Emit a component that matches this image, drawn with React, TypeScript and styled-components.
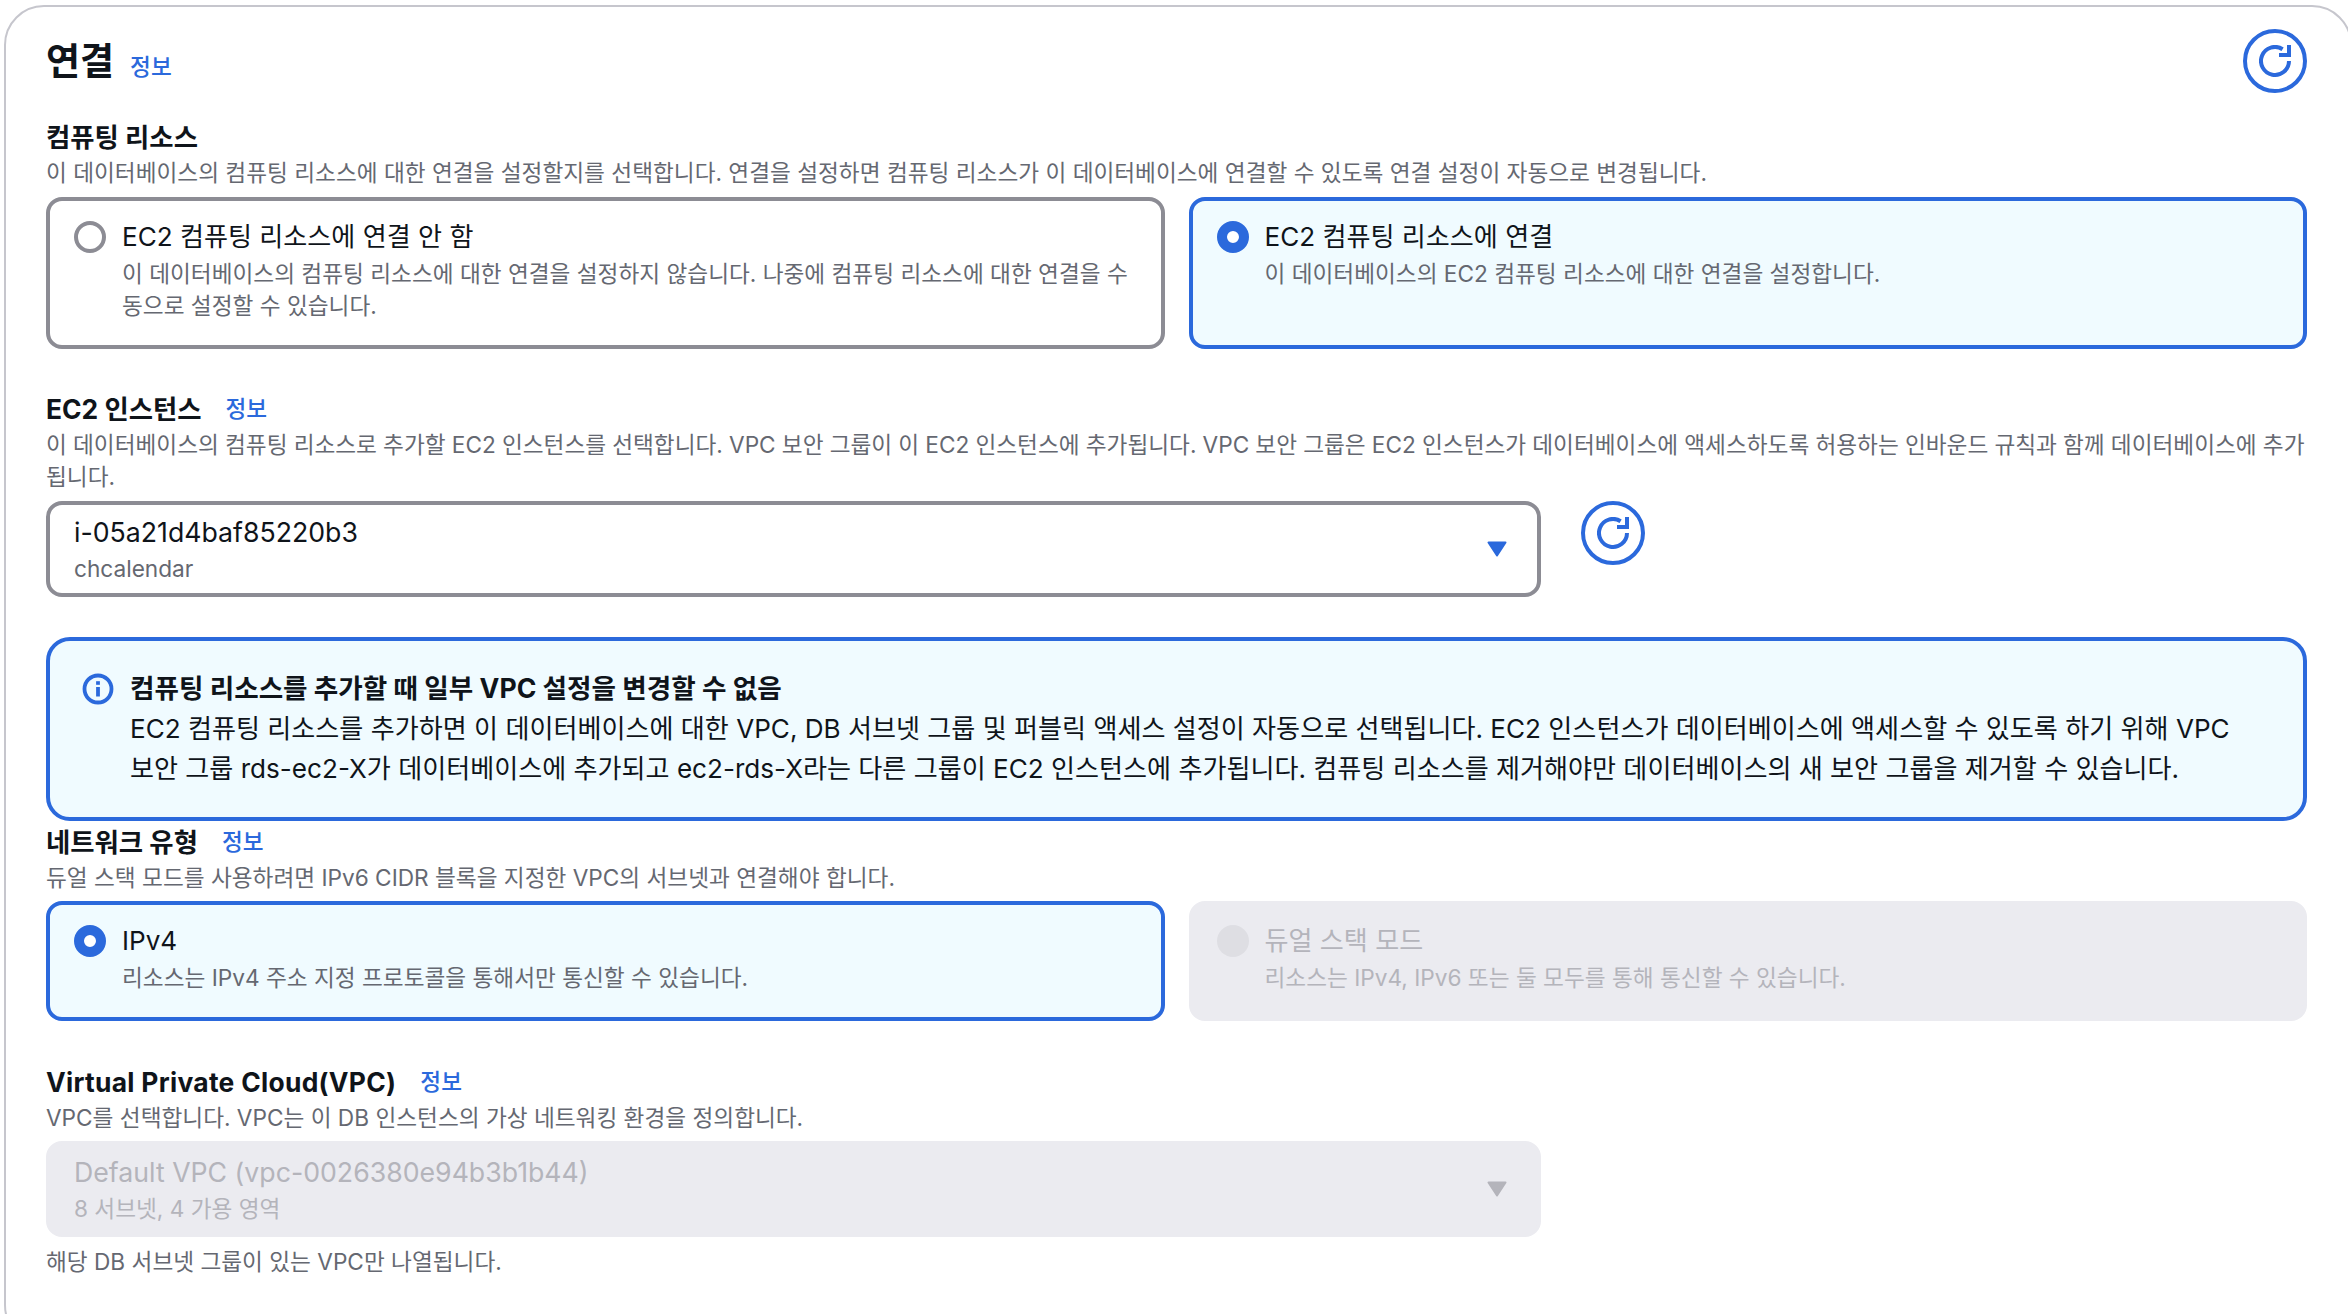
import React from "react";
import styled, { createGlobalStyle } from "styled-components";

const Blue = "#2b69dc";
const Ink = "#0f141a";
const Muted = "#656871";
const Line = "#8c8c94";
const Disabled = "#ebebf0";
const DisabledText = "#b4b4bb";

const GlobalStyle = createGlobalStyle`
  html, body {
    margin: 0;
    padding: 0;
    height: 1314px;
    overflow: hidden;
    background: #ffffff;
  }

  body {
    font-family: Inter, "Noto Sans CJK KR", sans-serif;
    color: ${Ink};
  }
`;

const Panel = styled.section`
  box-sizing: border-box;
  height: 1340px;
  margin: 5px -4px 0 4px;
  padding: 22px 43px 0 40px;
  border: 2px solid #c6c6cd;
  border-radius: 40px;
  background: #ffffff;
`;

const PanelHeader = styled.header`
  display: flex;
  align-items: center;
  justify-content: space-between;
  height: 63px;
`;

const TitleRow = styled.div`
  display: flex;
  align-items: baseline;
  gap: 16px;
`;

const Title = styled.h2`
  margin: 0 0 -2px;
  font-size: 37px;
  font-weight: 700;
  line-height: 46px;
`;

const InfoLink = styled.a`
  margin-bottom: -2px;
  color: ${Blue};
  font-size: 22.6px;
  font-weight: 500;
  line-height: 34px;
`;

const Field = styled.div<{ $top: number }>`
  margin-top: ${(p) => p.$top}px;
`;

const LabelRow = styled.div`
  display: flex;
  align-items: center;
  gap: 24px;
  height: 36px;
`;

const Label = styled.h3<{ $latin?: boolean }>`
  margin: 0 0 -2px;
  font-size: 26.4px;
  font-weight: 700;
  line-height: 38px;
  letter-spacing: ${(p) => (p.$latin ? "0.3px" : "0")};
`;

const Hint = styled.p<{ $above?: number; $below?: number; $tight?: boolean }>`
  margin: ${(p) => p.$above ?? 3}px 0 ${(p) => p.$below ?? 0}px;
  color: ${Muted};
  font-size: 22.65px;
  line-height: 32px;
  white-space: nowrap;
  word-spacing: ${(p) => (p.$tight ? "-0.2px" : "0")};
`;

const TileGrid = styled.div`
  display: grid;
  grid-template-columns: 1fr 1fr;
  gap: 24px;
`;

const Tile = styled.div<{ $state: "idle" | "checked" | "disabled" }>`
  box-sizing: border-box;
  display: flex;
  gap: 16px;
  padding: 20px 24px 23px;
  border: 4px solid
    ${(p) => (p.$state === "checked" ? Blue : p.$state === "disabled" ? Disabled : Line)};
  border-radius: 16px;
  background: ${(p) =>
    p.$state === "checked" ? "#f0fbff" : p.$state === "disabled" ? Disabled : "#ffffff"};
  color: ${(p) => (p.$state === "disabled" ? DisabledText : Ink)};
`;

const Radio = styled.span<{ $state: "idle" | "checked" | "disabled" }>`
  box-sizing: border-box;
  flex: none;
  width: 32px;
  height: 32px;
  border-radius: 50%;
  background: ${(p) => (p.$state === "disabled" ? "#dedee3" : "#ffffff")};
  border: ${(p) =>
    p.$state === "checked"
      ? `10px solid ${Blue}`
      : p.$state === "disabled"
        ? "none"
        : `4px solid ${Line}`};
`;

const TileBody = styled.div`
  min-width: 0;
`;

const TileTitle = styled.div`
  font-size: 26.1px;
  line-height: 32px;
`;

const TileHint = styled.div<{ $off?: boolean }>`
  margin-top: 5px;
  color: ${(p) => (p.$off ? DisabledText : Muted)};
  font-size: 22.65px;
  line-height: 32px;
`;

const SelectRow = styled.div`
  display: flex;
  align-items: flex-start;
  gap: 40px;
`;

const Select = styled.div<{ $off?: boolean }>`
  box-sizing: border-box;
  display: flex;
  align-items: center;
  justify-content: space-between;
  width: 1495px;
  height: 96px;
  padding: 0 30px 0 24px;
  border: 4px solid ${(p) => (p.$off ? Disabled : Line)};
  border-radius: 16px;
  background: ${(p) => (p.$off ? Disabled : "#ffffff")};
  color: ${(p) => (p.$off ? DisabledText : Ink)};
`;

const SelectValue = styled.div`
  font-size: 26.7px;
  line-height: 36px;
`;

const SelectSub = styled.div<{ $off?: boolean }>`
  margin-top: 3px;
  color: ${(p) => (p.$off ? DisabledText : Muted)};
  font-size: 22.65px;
  line-height: 32px;
`;

const RoundButton = styled.button`
  box-sizing: border-box;
  display: flex;
  flex: none;
  align-items: center;
  justify-content: center;
  width: 64px;
  height: 64px;
  padding: 0;
  border: 4px solid ${Blue};
  border-radius: 50%;
  background: #ffffff;
`;

const Alert = styled.div`
  box-sizing: border-box;
  display: flex;
  gap: 16px;
  margin-top: 40px;
  padding: 27px 32px 28px;
  border: 4px solid ${Blue};
  border-radius: 24px;
  background: #f0fbff;
`;

const AlertIcon = styled.svg`
  flex: none;
  width: 32px;
  height: 32px;
  margin-top: 5px;
`;

const AlertBody = styled.div`
  font-size: 26.1px;
  line-height: 40px;
`;

const AlertTitle = styled.div`
  margin-bottom: 1px;
  font-size: 26.6px;
  font-weight: 700;
`;

const RefreshIcon = () => (
  <svg width="32" height="32" viewBox="0 0 16 16" fill="none" stroke={Blue} strokeWidth="2">
    <path d="M15 8a7 7 0 1 1-3.2-5.9" />
    <path d="M15 0v5h-5" strokeLinejoin="miter" />
  </svg>
);

const Caret = ({ color }: { color: string }) => (
  <svg width="20" height="16" viewBox="0 0 20 16">
    <path
      d="M1.5 1.5h17L10 14.5z"
      fill={color}
      stroke={color}
      strokeWidth="2"
      strokeLinejoin="round"
    />
  </svg>
);

export default function App() {
  return (
    <>
      <GlobalStyle />
      <Panel>
        <PanelHeader>
          <TitleRow>
            <Title>연결</Title>
            <InfoLink>정보</InfoLink>
          </TitleRow>
          <RoundButton>
            <RefreshIcon />
          </RoundButton>
        </PanelHeader>

        <Field $top={26}>
          <Label>컴퓨팅 리소스</Label>
          <Hint $below={8}>
            이 데이터베이스의 컴퓨팅 리소스에 대한 연결을 설정할지를 선택합니다. 연결을 설정하면
            컴퓨팅 리소스가 이 데이터베이스에 연결할 수 있도록 연결 설정이 자동으로 변경됩니다.
          </Hint>
          <TileGrid>
            <Tile $state="idle">
              <Radio $state="idle" />
              <TileBody>
                <TileTitle>EC2 컴퓨팅 리소스에 연결 안 함</TileTitle>
                <TileHint>
                  이 데이터베이스의 컴퓨팅 리소스에 대한 연결을 설정하지 않습니다. 나중에 컴퓨팅
                  리소스에 대한 연결을 수<br />
                  동으로 설정할 수 있습니다.
                </TileHint>
              </TileBody>
            </Tile>
            <Tile $state="checked">
              <Radio $state="checked" />
              <TileBody>
                <TileTitle>EC2 컴퓨팅 리소스에 연결</TileTitle>
                <TileHint>이 데이터베이스의 EC2 컴퓨팅 리소스에 대한 연결을 설정합니다.</TileHint>
              </TileBody>
            </Tile>
          </TileGrid>
        </Field>

        <Field $top={41}>
          <LabelRow>
            <Label>EC2 인스턴스</Label>
            <InfoLink>정보</InfoLink>
          </LabelRow>
          <Hint $below={8} $tight>
            이 데이터베이스의 컴퓨팅 리소스로 추가할 EC2 인스턴스를 선택합니다. VPC 보안 그룹이 이
            EC2 인스턴스에 추가됩니다. VPC 보안 그룹은 EC2 인스턴스가 데이터베이스에 액세스하도록
            허용하는 인바운드 규칙과 함께 데이터베이스에 추가
            <br />
            됩니다.
          </Hint>
          <SelectRow>
            <Select>
              <div>
                <SelectValue>i-05a21d4baf85220b3</SelectValue>
                <SelectSub>chcalendar</SelectSub>
              </div>
              <Caret color={Blue} />
            </Select>
            <RoundButton>
              <RefreshIcon />
            </RoundButton>
          </SelectRow>
        </Field>

        <Alert>
          <AlertIcon viewBox="0 0 32 32" fill="none" stroke={Blue} strokeWidth="3.8">
            <circle cx="16" cy="16" r="13.5" />
            <path d="M16 14v9.5" />
            <path d="M16 8.2v3.6" />
          </AlertIcon>
          <AlertBody>
            <AlertTitle>컴퓨팅 리소스를 추가할 때 일부 VPC 설정을 변경할 수 없음</AlertTitle>
            EC2 컴퓨팅 리소스를 추가하면 이 데이터베이스에 대한 VPC, DB 서브넷 그룹 및 퍼블릭 액세스
            설정이 자동으로 선택됩니다. EC2 인스턴스가 데이터베이스에 액세스할 수 있도록 하기 위해 VPC
            <br />
            보안 그룹 rds-ec2-X가 데이터베이스에 추가되고 ec2-rds-X라는 다른 그룹이 EC2 인스턴스에
            추가됩니다. 컴퓨팅 리소스를 제거해야만 데이터베이스의 새 보안 그룹을 제거할 수 있습니다.
          </AlertBody>
        </Alert>

        <Field $top={2}>
          <LabelRow>
            <Label>네트워크 유형</Label>
            <InfoLink>정보</InfoLink>
          </LabelRow>
          <Hint $below={7}>
            듀얼 스택 모드를 사용하려면 IPv6 CIDR 블록을 지정한 VPC의 서브넷과 연결해야 합니다.
          </Hint>
          <TileGrid>
            <Tile $state="checked">
              <Radio $state="checked" />
              <TileBody>
                <TileTitle>IPv4</TileTitle>
                <TileHint>리소스는 IPv4 주소 지정 프로토콜을 통해서만 통신할 수 있습니다.</TileHint>
              </TileBody>
            </Tile>
            <Tile $state="disabled">
              <Radio $state="disabled" />
              <TileBody>
                <TileTitle>듀얼 스택 모드</TileTitle>
                <TileHint $off>리소스는 IPv4, IPv6 또는 둘 모두를 통해 통신할 수 있습니다.</TileHint>
              </TileBody>
            </Tile>
          </TileGrid>
        </Field>

        <Field $top={42}>
          <LabelRow>
            <Label $latin>Virtual Private Cloud(VPC)</Label>
            <InfoLink>정보</InfoLink>
          </LabelRow>
          <Hint $below={7}>VPC를 선택합니다. VPC는 이 DB 인스턴스의 가상 네트워킹 환경을 정의합니다.</Hint>
          <Select $off>
            <div>
              <SelectValue>Default VPC (vpc-0026380e94b3b1b44)</SelectValue>
              <SelectSub $off>8 서브넷, 4 가용 영역</SelectSub>
            </div>
            <Caret color={DisabledText} />
          </Select>
          <Hint $above={9}>해당 DB 서브넷 그룹이 있는 VPC만 나열됩니다.</Hint>
        </Field>
      </Panel>
    </>
  );
}
